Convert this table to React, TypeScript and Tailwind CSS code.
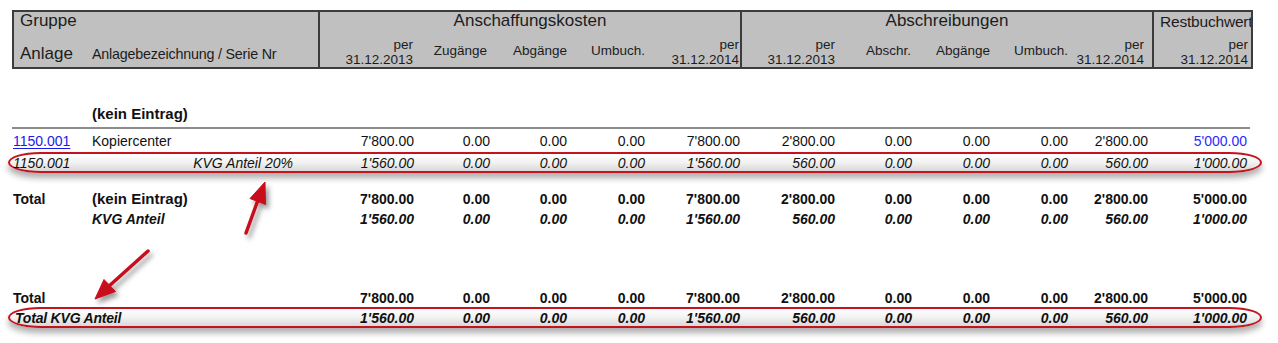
import React from "react";

const GRID =
  "grid grid-cols-[78px_230px_94px_76px_77px_78px_95px_95px_77px_78px_78px_80px_99px]";

const N1 = ["7'800.00", "0.00", "0.00", "0.00", "7'800.00", "2'800.00", "0.00", "0.00", "0.00", "2'800.00", "5'000.00"];
const N2 = ["1'560.00", "0.00", "0.00", "0.00", "1'560.00", "560.00", "0.00", "0.00", "0.00", "560.00", "1'000.00"];

function Nums({ values, last }: { values: string[]; last?: string }) {
  return (
    <>
      {values.map((v, i) => (
        <div
          key={i}
          className={`text-right whitespace-nowrap ${i === values.length - 1 && last ? last : ""}`}
        >
          {v}
        </div>
      ))}
    </>
  );
}

function PerDate({ date, extra }: { date: string; extra?: string }) {
  return (
    <div className={`flex flex-col items-end justify-end leading-[15px] ${extra ?? ""}`}>
      <span>per</span>
      <span>{date}</span>
    </div>
  );
}

function SubLabel({ text, extra }: { text: string; extra?: string }) {
  return <div className={`self-center pt-[4px] text-right ${extra ?? ""}`}>{text}</div>;
}

function Ellipse({ extra }: { extra: string }) {
  return (
    <div
      className={`absolute ${extra} rounded-[34px/11px] border-2 border-[#c4121e] bg-linear-to-b from-white via-[#f2f2f2] to-[#d8d8d8] shadow-[0_5px_6px_rgba(0,0,0,0.32)]`}
    />
  );
}

export default function App() {
  return (
    <div className="relative w-[1278px] h-[343px] overflow-hidden bg-white text-[#111] font-['Liberation_Sans',Arial,sans-serif]">
      {/* Header */}
      <div className="ml-[12px] mt-[10px] flex h-[59px] w-[1241px] border-2 border-[#3c3c3c] bg-[#c0c0c0] text-[#1c1c1c]">
        {/* Section 1 */}
        <div className="flex w-[306px] flex-col border-r-2 border-[#3c3c3c]">
          <div className="h-[20px] pl-[6px] text-[17px] leading-[20px] -mt-[1px]">Gruppe</div>
          <div className="flex h-[35px] items-end pb-[2px]">
            <div className="w-[70px] pl-[6px] text-[17px] leading-[20px]">Anlage</div>
            <div className="pl-[8px] text-[14.3px] leading-[20px] tracking-[-0.2px]">
              Anlagebezeichnung / Serie Nr
            </div>
          </div>
        </div>
        {/* Section 2 */}
        <div className="flex w-[422px] flex-col border-r-2 border-[#3c3c3c]">
          <div className="h-[20px] text-center text-[17px] leading-[20px] -mt-[1px]">Anschaffungskosten</div>
          <div className="grid h-[36px] grid-cols-[94px_76px_77px_78px_95px] text-[13.5px]">
            <PerDate date="31.12.2013" extra="pr-[1px]" />
            <SubLabel text="Zugänge" extra="pr-[3px]" />
            <SubLabel text="Abgänge" />
            <SubLabel text="Umbuch." />
            <PerDate date="31.12.2014" extra="pr-[1px]" />
          </div>
        </div>
        {/* Section 3 */}
        <div className="flex w-[412px] flex-col border-r-2 border-[#3c3c3c]">
          <div className="h-[20px] text-center text-[17px] leading-[20px] -mt-[1px]">Abschreibungen</div>
          <div className="grid h-[36px] grid-cols-[93px_77px_78px_78px_80px] text-[13.5px]">
            <PerDate date="31.12.2013" />
            <SubLabel text="Abschr." extra="pr-[1px]" />
            <SubLabel text="Abgänge" />
            <SubLabel text="Umbuch." />
            <PerDate date="31.12.2014" extra="pr-[4px]" />
          </div>
        </div>
        {/* Section 4 */}
        <div className="flex w-[97px] flex-col overflow-hidden">
          <div className="h-[20px] whitespace-nowrap pl-[6px] text-[15.5px] leading-[20px] tracking-[-0.2px]">
            Restbuchwert
          </div>
          <div className="flex h-[36px] justify-end text-[13.5px]">
            <PerDate date="31.12.2014" extra="pr-[3px]" />
          </div>
        </div>
      </div>

      {/* Body */}
      <div className="ml-[12px] w-[1235px] text-[14px] leading-[20px]">
        {/* group heading */}
        <div className={`${GRID} mt-[35px] h-[20px]`}>
          <div />
          <div className="pl-[2px] text-[15px] font-bold">(kein Eintrag)</div>
        </div>
        <div className="mt-[3px] h-[2px] w-[1238px] bg-[#8c8c8c]" />

        {/* row 1 */}
        <div className={`${GRID} mt-[2px] h-[20px]`}>
          <div className="pl-[1px]">
            <span className="text-[#1a1aee] underline decoration-1 underline-offset-2">1150.001</span>
          </div>
          <div className="pl-[2px]">Kopiercenter</div>
          <Nums values={N1} last="text-[#2a2aff]" />
        </div>

        {/* row 2 (circled) */}
        <div className="relative mt-[1px] h-[21px]">
          <Ellipse extra="-left-[4px] -right-[15px] top-0 bottom-0" />
          <div className={`${GRID} relative h-[21px] pt-[1px] italic`}>
            <div className="pl-[1px]">1150.001</div>
            <div className="pr-[27px] text-right">KVG Anteil 20%</div>
            <Nums values={N2} />
          </div>
        </div>

        {/* total 1 */}
        <div className={`${GRID} mt-[16px] h-[20px] font-bold`}>
          <div className="pl-[1px]">Total</div>
          <div className="pl-[2px] text-[15px]">(kein Eintrag)</div>
          <Nums values={N1} />
        </div>
        <div className={`${GRID} h-[20px] font-bold italic`}>
          <div />
          <div className="pl-[2px]">KVG Anteil</div>
          <Nums values={N2} />
        </div>

        {/* total 2 */}
        <div className={`${GRID} mt-[59px] h-[20px] font-bold`}>
          <div className="pl-[1px]">Total</div>
          <div />
          <Nums values={N1} />
        </div>
        <div className="relative -mt-[1px] h-[21px]">
          <Ellipse extra="-left-[4px] -right-[15px] top-0 bottom-0" />
          <div className={`${GRID} relative h-[21px] pt-[1px] font-bold italic`}>
            <div className="col-span-2 whitespace-nowrap pl-[3px] tracking-[-0.2px]">Total KVG Anteil</div>
            <Nums values={N2} />
          </div>
        </div>
      </div>

      {/* Annotation arrows */}
      <svg
        className="pointer-events-none absolute left-0 top-0"
        width="1278"
        height="343"
        viewBox="0 0 1278 343"
      >
        <defs>
          <filter id="sh" x="-50%" y="-50%" width="200%" height="200%">
            <feDropShadow dx="3" dy="4" stdDeviation="2.5" floodColor="#000" floodOpacity="0.4" />
          </filter>
        </defs>
        <g filter="url(#sh)" fill="#c8101c" stroke="#c8101c">
          <line x1="246" y1="233" x2="258" y2="200" strokeWidth="3.5" strokeLinecap="round" />
          <polygon points="265,182 265.5,204.5 250,198.5" strokeWidth="1" strokeLinejoin="round" />
          <line x1="148" y1="251" x2="108" y2="287" strokeWidth="3.5" strokeLinecap="round" />
          <polygon points="95,299 115.5,291.5 104,279.5" strokeWidth="1" strokeLinejoin="round" />
        </g>
      </svg>
    </div>
  );
}
